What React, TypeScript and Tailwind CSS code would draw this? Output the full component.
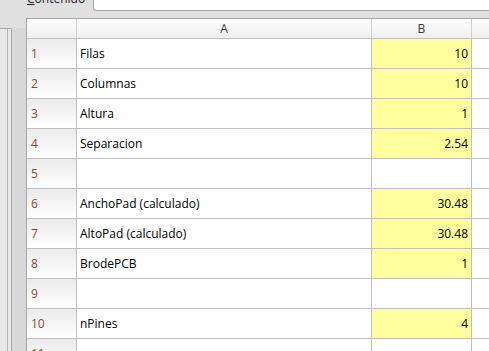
import React from "react";

const rows: { label: string; value: string }[] = [
  { label: "Filas", value: "10" },
  { label: "Columnas", value: "10" },
  { label: "Altura", value: "1" },
  { label: "Separacion", value: "2.54" },
  { label: "", value: "" },
  { label: "AnchoPad (calculado)", value: "30.48" },
  { label: "AltoPad (calculado)", value: "30.48" },
  { label: "BrodePCB", value: "1" },
  { label: "", value: "" },
  { label: "nPines", value: "4" },
  { label: "", value: "" },
];

export default function App() {
  return (
    <div
      className="w-[489px] h-[351px] overflow-hidden bg-[#e0e0e0] text-[12px] text-black"
      style={{ fontFamily: '"Open Sans", "Noto Sans", sans-serif' }}
    >
      {/* top strip: tab label + input */}
      <div className="flex h-[18px]">
        <div className="w-[93px] h-[11px] overflow-hidden">
          <div className="pl-[27px] -mt-[9px] leading-[16px] text-[#222]">
            <span className="underline">C</span>ontenido
          </div>
        </div>
        <div className="flex-1 h-[11px] bg-white border-l border-b border-[#a3a3a3] rounded-bl-[3px]" />
      </div>

      <div className="flex">
        {/* left docked panel */}
        <div className="w-[26px] h-[333px] flex">
          <div className="mt-[10px] w-[12px] h-[400px] border-t border-r border-[#a8a8a8] rounded-tr-[2px] bg-[#e9e9e9]">
            <div className="w-[8px] h-full border-r border-[#b4b4b4]" />
          </div>
          <div className="flex-1 mt-[10px] bg-[#d8d8d8]" />
        </div>

        {/* sheet */}
        <div className="flex-1 bg-white border-l border-t border-[#a6a6a6]">
          <div className="flex h-[20px] border-b border-[#c0c0c0] bg-gradient-to-b from-white to-[#eeeeee] text-[#3a3a3a]">
            <div className="w-[50px] border-r border-[#d0d0d0]" />
            <div className="w-[295px] border-r border-[#d0d0d0] flex items-center justify-center">A</div>
            <div className="w-[100px] border-r border-[#d0d0d0] flex items-center justify-center">B</div>
            <div className="flex-1" />
          </div>
          {rows.map((r, i) => (
            <div key={i} className="flex h-[30px] border-b border-[#c0c0c0]">
              <div className="w-[50px] border-r border-[#c0c0c0] bg-gradient-to-b from-[#ebebeb] to-white flex items-center pl-[4px] text-[#8b4a38]">
                {i + 1}
              </div>
              <div className="w-[295px] border-r border-[#c0c0c0] flex items-center pl-[3px]">{r.label}</div>
              <div
                className={`w-[100px] border-r border-[#c0c0c0] flex items-center justify-end pr-[3px] ${
                  r.value ? "bg-[#ffff9e]" : "bg-white"
                }`}
              >
                {r.value}
              </div>
              <div className="flex-1" />
            </div>
          ))}
        </div>
      </div>
    </div>
  );
}
